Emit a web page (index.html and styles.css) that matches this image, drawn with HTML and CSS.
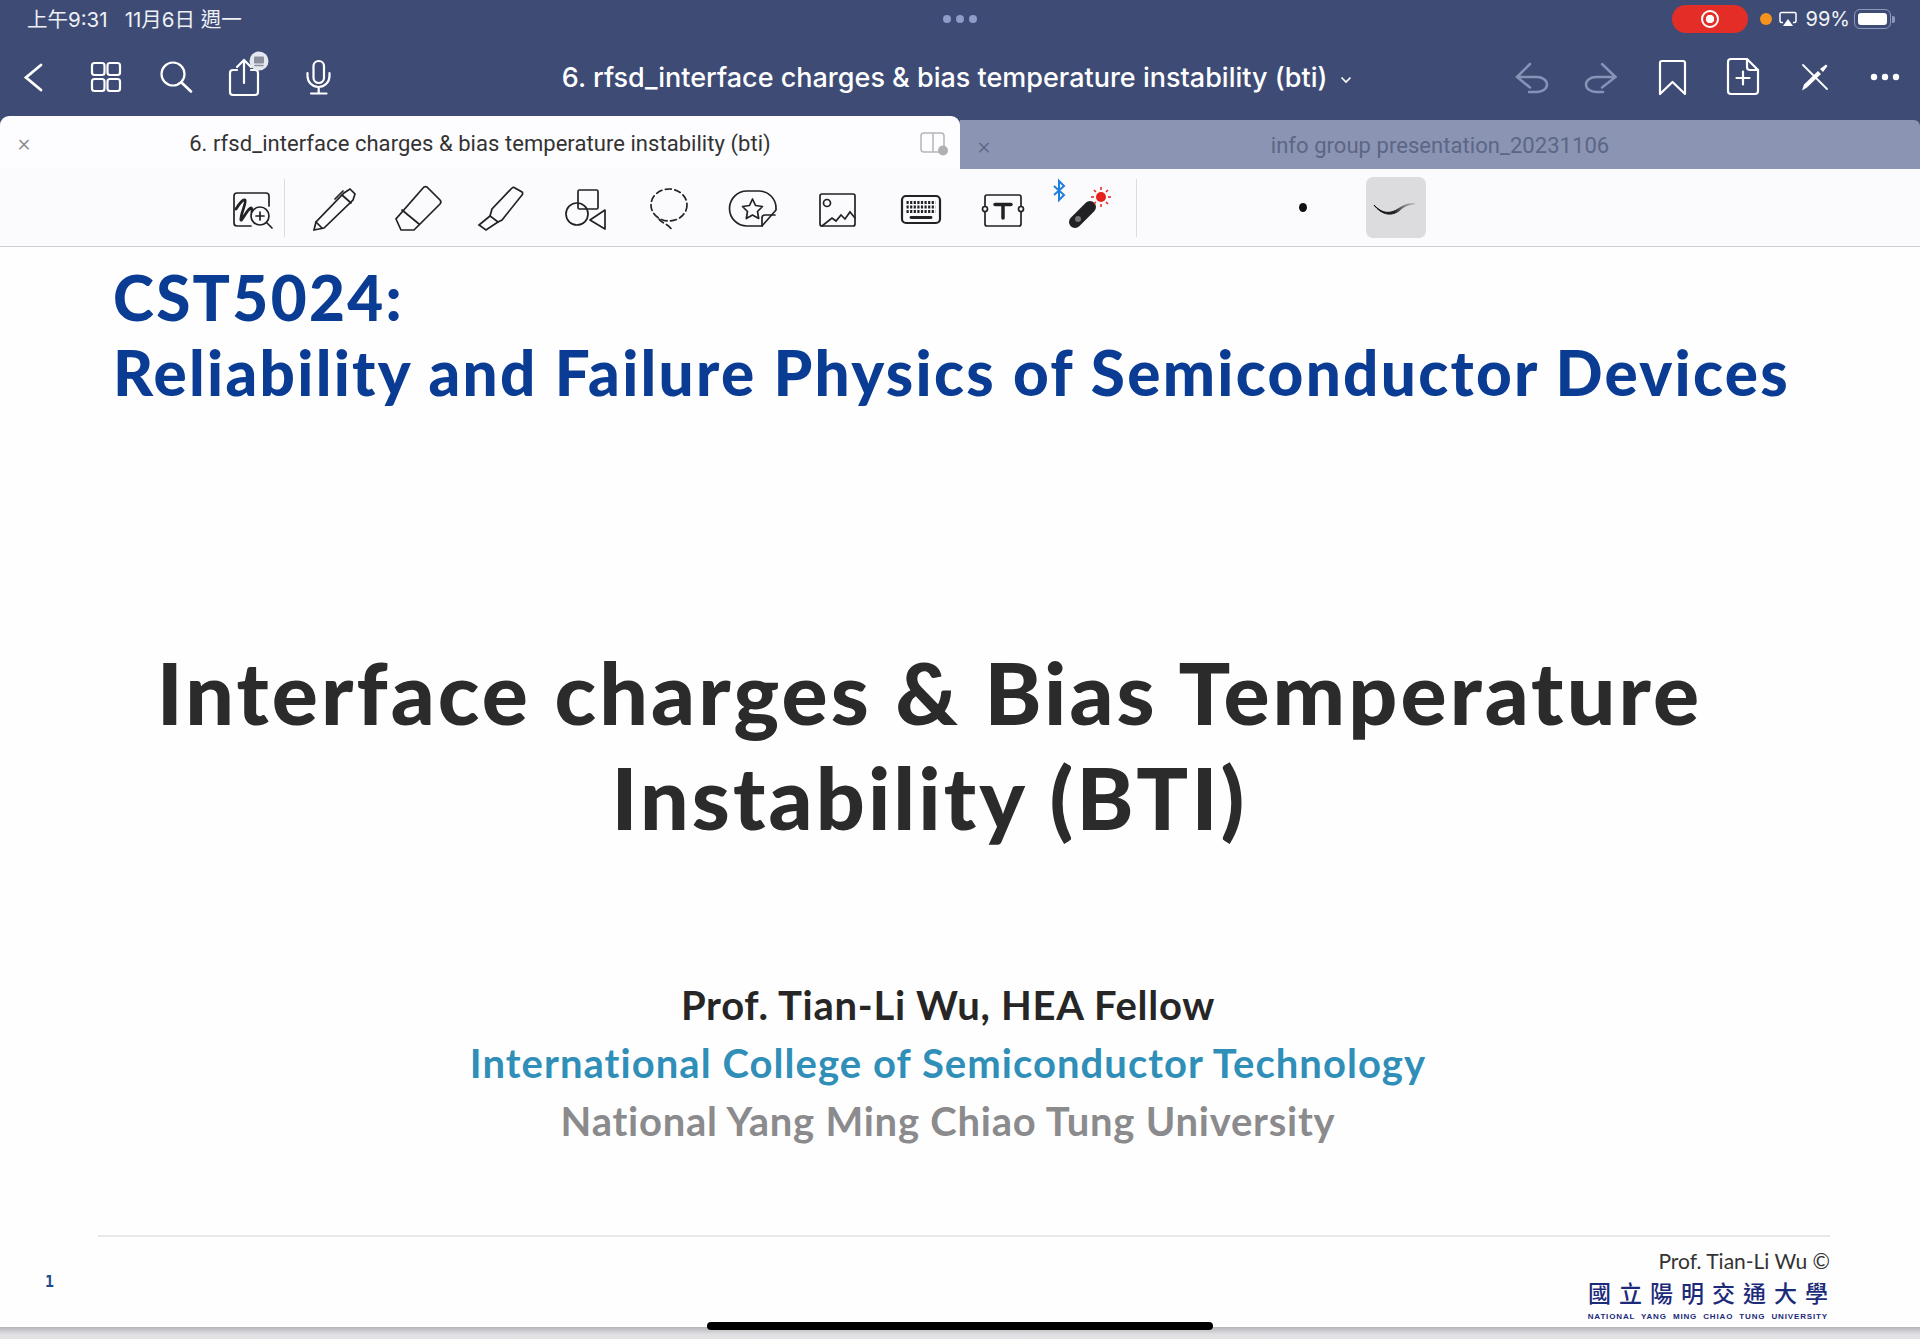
FILE: index.html
```html
<!DOCTYPE html>
<html lang="en">
<head>
  <meta charset="UTF-8" />
  <title>6. rfsd_interface charges &amp; bias temperature instability (bti)</title>
  <link rel="stylesheet" href="styles.css">
</head>
<body>
  <div class="topbar">
    <div class="status">
      <div class="status-time">上午9:31<span class="status-date">11月6日 週一</span></div>
      <div class="status-dots"><i></i><i></i><i></i></div>
      <div class="status-right">
        <div class="rec-pill"><span class="rec-ring"></span></div>
        <span class="mic-dot"></span>
        <svg class="airplay" width="18" height="16" viewBox="0 0 18 16">
          <path d="M4 11.5H2.5a1.5 1.5 0 0 1-1.500-1.500V3a1.500 1.500 0 0 1 1.500-1.500h13A1.500 1.500 0 0 1 17 3v7a1.500 1.500 0 0 1-1.500 1.500H14" fill="none" stroke="#fff" stroke-width="1.500"/>
          <path d="M9 8l5 7H4z" fill="#fff"/>
        </svg>
        <span class="battery-text">99%</span>
        <div class="battery"><div class="battery-fill"></div></div>
        <span class="battery-nub"></span>
      </div>
    </div>

    <div class="nav">
      <div class="nav-group nav-left">
        <div class="nav-slot"><svg class="ico" width="64" height="64" viewBox="0 0 64 64"><path d="M39 20L24 32.500 39 45" stroke-width="2.800"/></svg></div>
        <div class="nav-slot"><svg class="ico" width="64" height="64" viewBox="0 0 64 64"><rect x="19" y="18" width="12.500" height="12" rx="2.500"/><rect x="34.500" y="18" width="12.500" height="12" rx="2.500"/><rect x="19" y="34" width="12.500" height="12" rx="2.500"/><rect x="34.500" y="34" width="12.500" height="12" rx="2.500"/></svg></div>
        <div class="nav-slot"><svg class="ico" width="64" height="64" viewBox="0 0 64 64"><circle cx="29" cy="29" r="11.500"/><path d="M37.500 37.500L47 46.500" stroke-width="2.600"/></svg></div>
        <div class="nav-slot nav-slot-share"><svg class="ico" width="64" height="64" viewBox="0 0 64 64"><path d="M25 25h-4a3 3 0 0 0-3 3v19a3 3 0 0 0 3 3h22a3 3 0 0 0 3-3V28a3 3 0 0 0-3-3h-4"/><path d="M32 38V15M25 22l7-7 7 7"/><circle cx="47" cy="16" r="9.500" fill="#e4e7ef" stroke="none"/><rect x="42" y="11.500" width="10" height="7" rx="1" fill="#8a8f9c" stroke="none"/><path d="M43 20.500h8" stroke="#8a8f9c" stroke-width="1.500"/></svg></div>
        <div class="nav-slot"><svg class="ico" width="64" height="64" viewBox="0 0 64 64"><rect x="27.500" y="16" width="10.500" height="22" rx="5.200"/><path d="M21.500 28v3a11 11 0 0 0 22 0v-3M32.700 42v6M25 48.500h15.500"/></svg></div>
      </div>
      <div class="nav-title">6. rfsd_interface charges &amp; bias temperature instability (bti)<svg class="nav-caret" width="12" height="8" viewBox="0 0 12 8"><path d="M1.500 1.500L6 6l4.500-4.500" fill="none" stroke="#fff" stroke-width="1.600"/></svg></div>
      <div class="nav-group nav-right">
        <div class="nav-slot"><svg class="ico ico-dim" width="64" height="64" viewBox="0 0 64 64"><path d="M31 19L18 32l13 10.500M18 32h20a10 7.500 0 0 1 0 15h-8"/></svg></div>
        <div class="nav-slot"><svg class="ico ico-dim" width="64" height="64" viewBox="0 0 64 64"><path d="M33 19l13.500 13L33 42.500M46.500 32H27a10 7.500 0 0 0 0 15h7"/></svg></div>
        <div class="nav-slot"><svg class="ico" width="64" height="64" viewBox="0 0 64 64"><path d="M22 16h21a2 2 0 0 1 2 2v31L32.500 37 20 49V18a2 2 0 0 1 2-2z" stroke-linejoin="round"/></svg></div>
        <div class="nav-slot"><svg class="ico" width="64" height="64" viewBox="0 0 64 64"><path d="M20 14h16l11 11v21a3 3 0 0 1-3 3H20a3 3 0 0 1-3-3V17a3 3 0 0 1 3-3z"/><path d="M36 14v8a3 3 0 0 0 3 3h8M32 26.500v13M25.500 33h13"/></svg></div>
        <div class="nav-slot"><svg class="ico" width="64" height="64" viewBox="0 0 64 64"><path d="M21 20l24 24" stroke-width="1.800"/><path d="M20 45.500l2-6 14-13.500 3 3-14 13.500zM38 24l6-4.500 1.500 1.500-4.500 6z" fill="#fff" stroke="none"/></svg></div>
        <div class="nav-slot"><svg class="ico" width="64" height="64" viewBox="0 0 64 64"><circle cx="21" cy="32" r="3.200" fill="#fff" stroke="none"/><circle cx="32" cy="32" r="3.200" fill="#fff" stroke="none"/><circle cx="43" cy="32" r="3.200" fill="#fff" stroke="none"/></svg></div>
      </div>
    </div>
  </div>

  <div class="tabs">
    <div class="tab tab-active">
      <span class="tab-close">×</span>
      <span class="tab-title">6. rfsd_interface charges &amp; bias temperature instability (bti)</span>
      <div class="tab-split">
        <svg width="28" height="24" viewBox="0 0 28 24"><rect x="1" y="1" width="23" height="19" rx="3" fill="none" stroke="#b4b4ba" stroke-width="1.500"/><path d="M13 1v19" stroke="#b4b4ba" stroke-width="1.500"/><circle cx="23" cy="18.500" r="5" fill="#b0b0b4"/></svg>
      </div>
    </div>
    <div class="tab tab-other">
      <span class="tab-close tab-close-dim">×</span>
      <span class="tab-title">info group presentation_20231106</span>
    </div>
  </div>

  <div class="tools">
    <svg class="tool-first tool" width="66" height="72" viewBox="0 0 66 72">
      <path d="M36 54H22a3 3 0 0 1-3-3V24a3 3 0 0 1 3-3h29a3 3 0 0 1 3 3v10" />
      <path d="M21 37c3-5 7-10 9-9 2 2-5 15-4 20 1 1 7-12 10-12 2 0 0 7 2 9" stroke-width="2.800"/>
      <circle cx="45" cy="44" r="9" fill="#fbfafc"/>
      <path d="M45 40v8M41 44h8M51.500 50.500L57 56"/>
    </svg>
    <div class="tool-sep"></div>
    <div class="tool-slots">
      <div class="tool-slot"><svg class="tool" width="72" height="72" viewBox="0 0 72 72"><path d="M16 58l2-8 28-29 6-4 5 5-2 6-29 28z"/><path d="M18 50l6 6M44 23l9 8M37 27l8-8"/></svg></div>
      <div class="tool-slot"><svg class="tool" width="72" height="72" viewBox="0 0 72 72"><path d="M41 16a3 3 0 0 1 5 0l12 12a3 3 0 0 1 0 4L32 58H19l-5-11z"/><path d="M20 38l17 14"/></svg></div>
      <div class="tool-slot"><svg class="tool" width="72" height="72" viewBox="0 0 72 72"><path d="M47 16a2 2 0 0 1 3 0l7 4a2 2 0 0 1 0 3L37 48l-4 2-8-6 2-7z"/><path d="M25 44l-11 9 7 5 12-8"/></svg></div>
      <div class="tool-slot"><svg class="tool" width="72" height="72" viewBox="0 0 72 72"><rect x="29" y="18" width="20" height="19" rx="1.500"/><circle cx="28" cy="42" r="11"/><path d="M56 38L41 48l15 9z" stroke-linejoin="round"/></svg></div>
      <div class="tool-slot"><svg class="tool" width="72" height="72" viewBox="0 0 72 72"><ellipse cx="36" cy="33" rx="18" ry="16" stroke-dasharray="6 3.500"/><path d="M26 47c1 4 9 4 13 11" stroke-dasharray="6 3.500"/></svg></div>
      <div class="tool-slot"><svg class="tool" width="72" height="72" viewBox="0 0 72 72"><path d="M31 19h12a17 17 0 0 1 17 17v2L46 54H31a17.500 17.500 0 0 1 0-35z"/><path d="M46 54V46a3 3 0 0 1 3-3h10"/><path d="M36.500 27l3 6.500 7 1-5 5 1.200 7-6.200-3.400-6.200 3.400 1.200-7-5-5 7-1z" stroke-linejoin="round"/></svg></div>
      <div class="tool-slot"><svg class="tool" width="72" height="72" viewBox="0 0 72 72"><rect x="20" y="22" width="35" height="32" rx="2"/><circle cx="27" cy="31" r="3.500"/><path d="M22 54l10-8 4 3 5-6 4 4 5-7 5 6"/></svg></div>
      <div class="tool-slot"><svg class="tool" width="72" height="72" viewBox="0 0 72 72"><rect x="18" y="24" width="38" height="27" rx="4" stroke-width="2.200"/><path d="M22.500 30.500h29M22.500 35h29M22.500 39.500h29" stroke-width="2.800" stroke-linecap="butt" stroke-dasharray="2.200 1.400"/><path d="M27 45.500h20" stroke-width="2.800"/></svg></div>
      <div class="tool-slot"><svg class="tool" width="72" height="72" viewBox="0 0 72 72"><path d="M18 34V25a2 2 0 0 1 2-2h32a2 2 0 0 1 2 2v9M18 40v12a2 2 0 0 0 2 2h32a2 2 0 0 0 2-2V40"/><circle cx="18" cy="37" r="2.500"/><circle cx="54" cy="37" r="2.500"/><path d="M28 32.500h16M36 32.500V46" stroke-width="3.500"/></svg></div>
      <div class="tool-slot"><svg width="72" height="72" viewBox="0 0 72 72"><path d="M3 14l10 9-5 5V9l5 5L3 23" fill="none" stroke="#1d7fe0" stroke-width="2"/><path d="M24 50l15-15" stroke="#222226" stroke-width="12" stroke-linecap="round"/><circle cx="27" cy="47" r="3" fill="#777"/><circle cx="50" cy="25" r="5" fill="#e8201c"/><path d="M50 15v3M50 32v3M40 25h3M57 25h3M43 18l2 2M55 30l2 2M57 18l-2 2M45 30l-2 2" stroke="#e8201c" stroke-width="1.500"/></svg></div>
    </div>
    <div class="tool-sep tool-sep-2"></div>
    <span class="pen-dot"></span>
    <div class="pen-style">
      <svg width="60" height="61" viewBox="0 0 60 61">
        <defs><linearGradient id="stroke-fade" x1="0" x2="1" y1="0" y2="0"><stop offset="0" stop-color="#000"/><stop offset="0.500" stop-color="#222"/><stop offset="1" stop-color="#999" stop-opacity="0.300"/></linearGradient></defs>
        <path d="M8 28c8 9 16 9 24 4 6-4 11-6 17-5-6 0-11 2-16 7-9 6-18 3-25-6z" fill="url(#stroke-fade)" stroke="url(#stroke-fade)" stroke-width="1"/>
      </svg>
    </div>
  </div>

  <div class="slide">
    <div class="slide-head">
      <h1>CST5024:</h1>
      <h1>Reliability and Failure Physics of Semiconductor Devices</h1>
    </div>
    <div class="slide-title">
      <h2>Interface charges &amp; Bias Temperature</h2>
      <h2>Instability (BTI)</h2>
    </div>
    <div class="slide-author">
      <p class="author-name">Prof. Tian-Li Wu, HEA Fellow</p>
      <p class="author-college">International College of Semiconductor Technology</p>
      <p class="author-school">National Yang Ming Chiao Tung University</p>
    </div>
    <div class="slide-rule"></div>
    <div class="slide-foot">
      <span class="page-num">1</span>
      <div class="foot-right">
        <div class="foot-credit">Prof. Tian-Li Wu ©</div>
        <div class="foot-logo">國立陽明交通大學</div>
        <div class="foot-logo-en">NATIONAL YANG MING CHIAO TUNG UNIVERSITY</div>
      </div>
    </div>
  </div>
  <div class="slide-shadow"></div>
  <div class="home-bar"></div>
</body>
</html>
```

FILE: styles.css
```css
* {
  box-sizing: border-box;
}

html, body {
  margin: 0;
  height: 1342px;
  overflow: hidden;
}

body {
  display: flex;
  flex-direction: column;
  position: relative;
  background: #fff;
  font-family: Roboto, "Noto Sans CJK TC", sans-serif;
}

/* top bar */
.topbar {
  background: #3e4c75;
  height: 116px;
  flex: none;
  color: #fff;
}

.status {
  height: 38px;
  display: flex;
  align-items: center;
  justify-content: space-between;
  padding: 0 25px 0 27px;
  position: relative;
}

.status-time {
  font-family: Inter, "Noto Sans CJK TC", sans-serif;
  font-size: 20.500px;
  color: #eef0f5;
  margin-bottom: 2px;
}

.status-date {
  margin-left: 17px;
}

.status-dots {
  position: absolute;
  left: 943px;
  top: 15px;
  display: flex;
  gap: 5px;
}

.status-dots i {
  display: block;
  width: 8px;
  height: 8px;
  border-radius: 50%;
  background: #8e9cc8;
}

.status-right {
  display: flex;
  align-items: center;
}

.rec-pill {
  width: 76px;
  height: 28px;
  border-radius: 14px;
  background: #e52d27;
  display: flex;
  align-items: center;
  justify-content: center;
}

.rec-ring {
  width: 18px;
  height: 18px;
  border-radius: 50%;
  border: 2px solid #fff;
  position: relative;
  background: radial-gradient(circle, #fff 0 4px, #e52d27 4.500px);
}

.mic-dot {
  width: 12px;
  height: 12px;
  border-radius: 50%;
  background: #f5941d;
  margin-left: 12px;
}

.airplay {
  margin-left: 6.500px;
}

.battery-text {
  font-family: Inter, sans-serif;
  font-size: 20px;
  margin-left: 9px;
  color: #f2f3f7;
}

.battery {
  width: 37px;
  height: 20px;
  margin-left: 4px;
  padding: 3px;
  border: 1.500px solid #8e98b8;
  border-radius: 6px;
}

.battery-fill {
  height: 100%;
  background: #fff;
  border-radius: 3px;
}

.battery-nub {
  width: 3px;
  height: 7px;
  margin-left: 1px;
  border-radius: 0 2px 2px 0;
  background: #8e98b8;
}

/* nav row */
.nav {
  height: 78px;
  display: flex;
  align-items: center;
}

.nav-group {
  display: flex;
  flex: none;
}

.nav-left {
  margin-left: -2px;
}

.nav-slot {
  width: 71px;
  display: flex;
  justify-content: center;
}

.nav-right .nav-slot {
  width: 70.800px;
}

.nav-slot-share {
  margin-left: -3px;
  margin-right: 3px;
}

.ico {
  fill: none;
  stroke: #fff;
  stroke-width: 2.200;
  stroke-linecap: round;
}

.ico-dim {
  stroke: #8793b6;
  stroke-width: 2.500;
}

.nav-title {
  flex: 1;
  text-align: center;
  font-family: Inter, sans-serif;
  font-size: 27px;
  font-weight: 500;
  white-space: nowrap;
  padding-left: 66px;
}

.nav-caret {
  margin-left: 13px;
  vertical-align: 3px;
}

/* tabs */
.tabs {
  height: 53px;
  flex: none;
  display: flex;
  align-items: flex-end;
  background: #3e4c75;
}

.tab {
  width: 960px;
  display: flex;
  align-items: center;
  font-size: 22px;
}

.tab-active {
  height: 53px;
  background: #fdfcfe;
  color: #333;
  border-radius: 9px 9px 0 0;
  padding-top: 1px;
}

.tab-other {
  height: 49px;
  background: #8b94b3;
  color: #5c6685;
  border-radius: 0 6px 0 0;
  padding-right: 48px;
  padding-top: 2px;
}

.tab-close {
  width: 48px;
  text-align: center;
  font-size: 24px;
  font-weight: 300;
  color: #85858a;
  flex: none;
}

.tab-close-dim {
  color: #5c6685;
}

.tab-title {
  flex: 1;
  text-align: center;
  white-space: nowrap;
  letter-spacing: 0.050px;
}

.tab-split {
  width: 48px;
  padding: 2px 12px 0 8px;
  flex: none;
  display: flex;
}

/* tool strip */
.tools {
  height: 78px;
  flex: none;
  display: flex;
  align-items: center;
  padding-left: 215px;
  background: #fbfafc;
  border-bottom: 1px solid #cdcdcf;
}

.tool {
  fill: none;
  stroke: #222226;
  stroke-width: 1.700;
  stroke-linecap: round;
}

.tool-first {
  flex: none;
}

.tool-sep {
  width: 1px;
  height: 58px;
  background: #dcdcde;
  margin-left: 3px;
  flex: none;
}

.tool-slots {
  display: flex;
  margin-left: 7px;
}

.tool-slot {
  width: 83.700px;
  display: flex;
  justify-content: center;
}

.tool-sep-2 {
  margin-left: 7px;
}

.pen-dot {
  width: 8px;
  height: 9px;
  border-radius: 50%;
  background: #111;
  margin-left: 162px;
}

.pen-style {
  width: 60px;
  height: 61px;
  margin-left: 59.500px;
  background: #dcdbde;
  border-radius: 7px;
}

/* slide */
.slide {
  flex: 1;
  display: flex;
  flex-direction: column;
  background: #fefefe;
  font-family: Lato, sans-serif;
}

.slide-head {
  padding: 13px 0 0 113px;
}

.slide-head h1 {
  margin: 0;
  font-size: 62px;
  line-height: 75px;
  font-weight: 900;
  letter-spacing: 2.300px;
  color: #0b3c94;
  white-space: nowrap;
}

.slide-title {
  margin-top: 229px;
  padding-right: 61px;
  text-align: center;
}

.slide-title h2 {
  margin: 0;
  font-size: 86px;
  line-height: 105px;
  font-weight: 900;
  letter-spacing: 3.100px;
  color: #2b2b2b;
  white-space: nowrap;
}

.slide-author {
  margin-top: 127px;
  padding-right: 24px;
  text-align: center;
  font-weight: 700;
  font-size: 40px;
  line-height: 58px;
  letter-spacing: 1.050px;
}

.slide-author p {
  margin: 0;
  white-space: nowrap;
}

.author-name {
  color: #262626;
  letter-spacing: 0.730px;
}

.author-college {
  color: #2f8fb8;
}

.author-school {
  color: #8b8b8d;
  letter-spacing: 0.750px;
}

.slide-rule {
  height: 2px;
  margin: auto 90px 0 98px;
  background: #e8e8e8;
  flex: none;
}

.slide-foot {
  height: 90px;
  flex: none;
  display: flex;
  justify-content: space-between;
  padding: 0 90px 0 45px;
}

.page-num {
  font-family: "DejaVu Sans Mono", monospace;
  font-size: 15px;
  font-weight: 700;
  color: #1f4a8a;
  margin-top: 36px;
}

.foot-right {
  text-align: right;
  padding-top: 11px;
}

.foot-credit {
  font-size: 21px;
  line-height: 26px;
  color: #333;
}

.foot-logo {
  font-family: "Noto Sans CJK TC", sans-serif;
  font-weight: 500;
  font-size: 23px;
  line-height: 26px;
  letter-spacing: 8px;
  margin: 5px -6px 0 0;
  color: #1c2a7a;
}

.foot-logo-en {
  font-family: "Liberation Sans", sans-serif;
  font-weight: 700;
  font-size: 8px;
  line-height: 12px;
  letter-spacing: 0.850px;
  word-spacing: 3px;
  margin: 6px 2px 0 0;
  color: #1c2a7a;
}

.slide-shadow {
  height: 12px;
  flex: none;
  margin-bottom: 3px;
  background: linear-gradient(#b6b5b9, #dfdee2 60%, #e4e3e6);
}

.home-bar {
  position: absolute;
  left: 707px;
  top: 1322px;
  width: 506px;
  height: 8px;
  border-radius: 4px;
  background: #000;
}
```
